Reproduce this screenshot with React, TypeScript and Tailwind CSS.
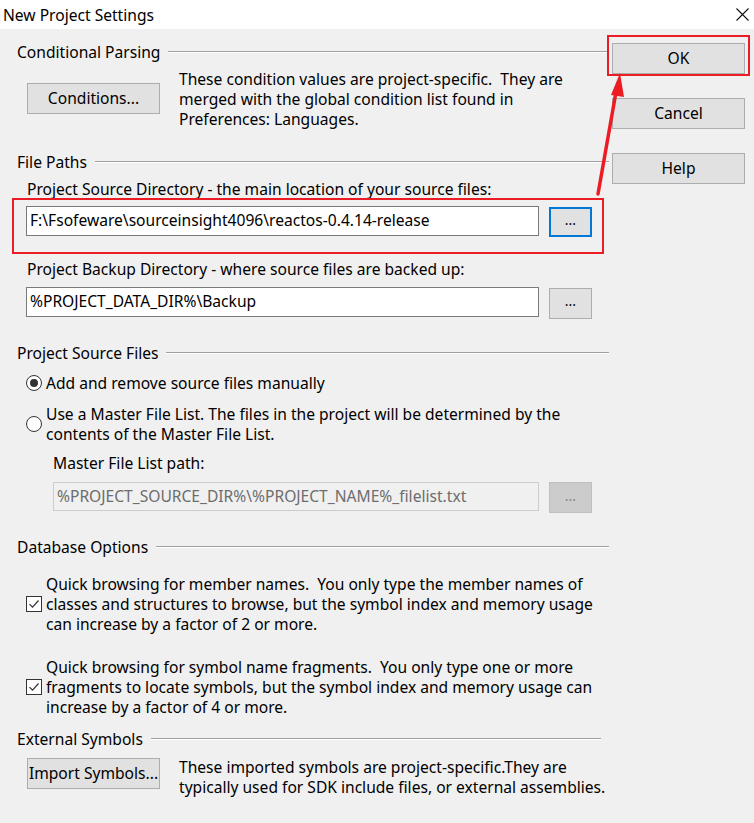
import React from "react";

const font = { fontFamily: '"Noto Sans", "Open Sans", sans-serif' };

function GroupHeader({ label, lineEnd = "mr-0" }: { label: string; lineEnd?: string }) {
  return (
    <div className="flex h-5 items-center">
      <span className="whitespace-nowrap leading-5">{label}</span>
      <div className={`ml-2 flex-1 ${lineEnd}`}>
        <div className="h-px bg-[#a0a0a0]" />
        <div className="h-px bg-white" />
      </div>
    </div>
  );
}

function Button({ children, className = "" }: { children: React.ReactNode; className?: string }) {
  return (
    <div
      className={`flex items-center justify-center border border-[#adadad] bg-[#e1e1e1] text-black ${className}`}
    >
      {children}
    </div>
  );
}

function Check() {
  return (
    <div className="flex h-[16px] w-[16px] shrink-0 items-center justify-center border border-[#333333] bg-white">
      <svg width="12" height="12" viewBox="0 0 12 12">
        <path d="M1.5 6.2 L4.5 9.2 L10.5 2.5" fill="none" stroke="#333" strokeWidth="1.2" />
      </svg>
    </div>
  );
}

function Radio({ on }: { on?: boolean }) {
  return (
    <div className="flex h-[16px] w-[16px] shrink-0 items-center justify-center rounded-full border border-[#333333] bg-white">
      {on && <div className="h-2 w-2 rounded-full bg-[#333333]" />}
    </div>
  );
}

export default function App() {
  return (
    <div className="relative h-[823px] w-[754px] overflow-hidden bg-[#f0f0f0] text-[15.6px] text-black" style={font}>
      {/* Title bar */}
      <div className="flex h-[29px] items-center justify-between bg-white pl-[3px] pr-[5px]">
        <span className="leading-5">New Project Settings</span>
        <svg width="13" height="13" viewBox="0 0 13 13">
          <path d="M0.5 0.5 L12.5 12.5 M12.5 0.5 L0.5 12.5" stroke="#111" strokeWidth="1.1" />
        </svg>
      </div>

      <div className="flex">
        {/* Main column */}
        <div className="w-[609px] pl-[17px]">
          <div className="pt-[13px]">
            <GroupHeader label="Conditional Parsing" />
          </div>
          <div className="mt-[7px] flex pl-[10px]">
            <Button className="mt-[14px] h-[31px] w-[133px]">Conditions...</Button>
            <p className="ml-[19px] leading-5">
              These condition values are project-specific.&nbsp; They are
              <br />
              merged with the global condition list found in
              <br />
              Preferences: Languages.
            </p>
          </div>

          <div className="mt-[23px]">
            <GroupHeader label="File Paths" />
          </div>
          <div className="pl-[10px]">
            <div className="mt-[7px] leading-5">Project Source Directory - the main location of your source files:</div>
            <div className="mt-[7px] flex items-start">
              <div className="-ml-px flex h-[30px] w-[513px] items-center border border-[#7a7a7a] bg-white pl-[3px]">
                F:\Fsofeware\sourceinsight4096\reactos-0.4.14-release
              </div>
              <div className="ml-[10px] mt-px flex h-[30px] w-[43px] items-start justify-center border-2 border-[#0078d7] bg-[#e1e1e1] pt-px text-[14px] leading-5">
                ...
              </div>
            </div>

            <div className="mt-[22px] leading-5">Project Backup Directory - where source files are backed up:</div>
            <div className="mt-[8px] flex items-start">
              <div className="-ml-px flex h-[30px] w-[513px] items-center border border-[#7a7a7a] bg-white pl-[3px]">
                %PROJECT_DATA_DIR%\Backup
              </div>
              <Button className="ml-[10px] mt-px h-[31px] w-[43px] !items-start pt-[2px] text-[14px] leading-5">...</Button>
            </div>
          </div>

          <div className="mt-[24px]">
            <GroupHeader label="Project Source Files" />
          </div>
          <div className="pl-[9px]">
            <div className="mt-[10px] flex items-center gap-[4px]">
              <Radio on />
              <span className="leading-5">Add and remove source files manually</span>
            </div>
            <div className="mt-[11px] flex items-center gap-[4px]">
              <Radio />
              <span className="leading-5">
                Use a Master File List. The files in the project will be determined by the
                <br />
                contents of the Master File List.
              </span>
            </div>
            <div className="pl-[27px]">
              <div className="mt-[9px] leading-5">Master File List path:</div>
              <div className="mt-[9px] flex items-start">
                <div className="flex h-[29px] w-[486px] items-center border border-[#cccccc] bg-[#f0f0f0] pl-[3px] text-[#6d6d6d]">
                  %PROJECT_SOURCE_DIR%\%PROJECT_NAME%_filelist.txt
                </div>
                <div className="ml-[10px] flex h-[31px] w-[43px] items-start justify-center border border-[#bfbfbf] bg-[#cccccc] pt-[3px] text-[14px] leading-5 text-[#838383]">
                  ...
                </div>
              </div>
            </div>
          </div>

          <div className="mt-[24px]">
            <GroupHeader label="Database Options" />
          </div>
          <div className="pl-[9px]">
            <div className="mt-[17px] flex items-center gap-[4px]">
              <Check />
              <span className="leading-5">
                Quick browsing for member names.&nbsp; You only type the member names of
                <br />
                classes and structures to browse, but the symbol index and memory usage
                <br />
                can increase by a factor of 2 or more.
              </span>
            </div>
            <div className="mt-[23px] flex items-center gap-[4px]">
              <Check />
              <span className="leading-5">
                Quick browsing for symbol name fragments.&nbsp; You only type one or more
                <br />
                fragments to locate symbols, but the symbol index and memory usage can
                <br />
                increase by a factor of 4 or more.
              </span>
            </div>
          </div>

          <div className="mt-[12px]">
            <GroupHeader label="External Symbols" lineEnd="mr-[8px]" />
          </div>
          <div className="mt-[8px] flex pl-[10px]">
            <Button className="mt-px h-[31px] w-[133px]">Import Symbols...</Button>
            <p className="ml-[19px] leading-5">
              These imported symbols are project-specific.They are
              <br />
              typically used for SDK include files, or external assemblies.
            </p>
          </div>
        </div>

        {/* Right buttons */}
        <div className="ml-[3px] flex w-[133px] flex-col gap-[24px] pt-[14px]">
          <Button className="h-[31px]">OK</Button>
          <Button className="h-[31px]">Cancel</Button>
          <Button className="h-[31px]">Help</Button>
        </div>
      </div>

      {/* Red annotations */}
      <div className="pointer-events-none absolute left-[607px] top-[35px] h-[41px] w-[143px] border-2 border-[#ec1c24]" />
      <div className="pointer-events-none absolute left-[12px] top-[198px] h-[56px] w-[592px] border-2 border-[#ec1c24]" />
      <svg className="pointer-events-none absolute left-0 top-0" width="754" height="823">
        <line x1="598" y1="194" x2="616" y2="92" stroke="#ec1c24" strokeWidth="3.5" strokeLinecap="round" />
        <polygon points="620,73 611,95 624,97" fill="#ec1c24" />
      </svg>
    </div>
  );
}
